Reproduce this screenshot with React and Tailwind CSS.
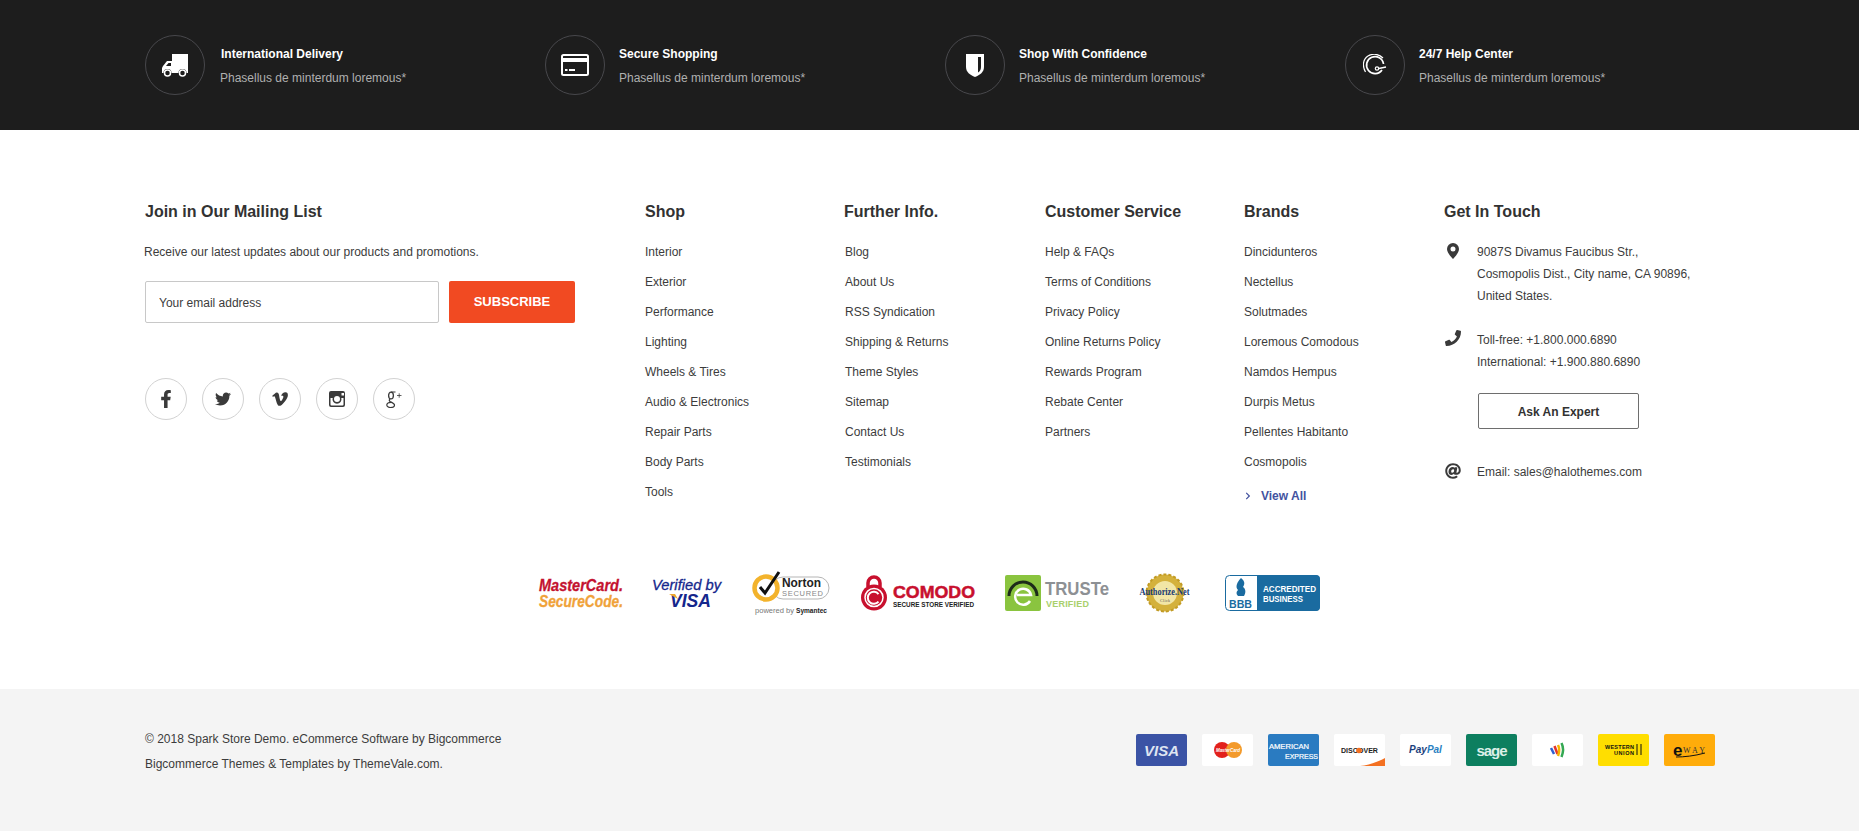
import React from 'react';
import { FaFacebookF, FaTwitter, FaVimeoV, FaPhone, FaAt, FaChevronRight } from 'react-icons/fa';

const features = ['International Delivery', 'Secure Shopping', 'Shop With Confidence', '24/7 Help Center'];

const columns = [
    { title: 'Shop', width: 'w-[199px]', items: ['Interior', 'Exterior', 'Performance', 'Lighting', 'Wheels & Tires', 'Audio & Electronics', 'Repair Parts', 'Body Parts', 'Tools'] },
    { title: 'Further Info.', width: 'w-[201px]', listClass: 'pl-px', items: ['Blog', 'About Us', 'RSS Syndication', 'Shipping & Returns', 'Theme Styles', 'Sitemap', 'Contact Us', 'Testimonials'] },
    { title: 'Customer Service', width: 'w-[199px]', items: ['Help & FAQs', 'Terms of Conditions', 'Privacy Policy', 'Online Returns Policy', 'Rewards Program', 'Rebate Center', 'Partners'] },
    { title: 'Brands', width: 'w-[200px]', items: ['Dincidunteros', 'Nectellus', 'Solutmades', 'Loremous Comodous', 'Namdos Hempus', 'Durpis Metus', 'Pellentes Habitanto', 'Cosmopolis'], viewAll: true },
];

const TruckIcon = () => (
    <svg width="26" height="23" viewBox="0 0 26 23">
        <path d="M10 0h16v19H10z" fill="#fff" />
        <path d="M10 7H5L1 12 0 14v5h10z" fill="#fff" />
        <path d="M4 12l2.500-3H9v3z" fill="#1d1d1d" />
        <circle cx="5.500" cy="19" r="4" fill="#1d1d1d" />
        <circle cx="20.500" cy="19" r="4" fill="#1d1d1d" />
        <circle cx="5.500" cy="19" r="3" fill="#1d1d1d" stroke="#fff" strokeWidth="1.500" />
        <circle cx="20.500" cy="19" r="3" fill="#1d1d1d" stroke="#fff" strokeWidth="1.500" />
    </svg>
);

const CardIcon = () => (
    <svg width="28" height="22" viewBox="0 0 28 22">
        <rect x="1" y="1" width="26" height="20" rx="1.500" fill="none" stroke="#fff" strokeWidth="2" />
        <rect x="1" y="4" width="26" height="4" fill="#fff" />
        <rect x="4" y="15" width="2.500" height="2" fill="#fff" />
        <rect x="8" y="15" width="6" height="2" fill="#fff" />
    </svg>
);

const ShieldIcon = () => (
    <svg width="18" height="23" viewBox="0 0 18 23">
        <path d="M0 0h18v13c0 5-4 8-9 10-5-2-9-5-9-10z" fill="#fff" />
        <path d="M12 3h3v10c0 3-1.500 4.500-3 5.500z" fill="#1d1d1d" />
    </svg>
);

const HeadsetIcon = () => (
    <svg width="24" height="22" viewBox="0 0 24 22" fill="none" stroke="#fff">
        <path d="M2.500 18C-1 12 0 5 5 2c5-3 11-2 15 2" strokeWidth="1.200" />
        <path d="M20.500 10a8.500 8.500 0 1 0-1.500 6" strokeWidth="1.700" />
        <circle cx="14" cy="14.500" r="1.700" strokeWidth="1.200" />
        <path d="M15.800 14.500l7.200-1.500" strokeWidth="1.400" />
    </svg>
);

const featureIcons = [<TruckIcon />, <CardIcon />, <ShieldIcon />, <HeadsetIcon />];

const InstagramIcon = () => (
    <svg width="16" height="16" viewBox="0 0 16 16">
        <path fillRule="evenodd" d="M2 0h12a2 2 0 0 1 2 2v12a2 2 0 0 1-2 2H2a2 2 0 0 1-2-2V2a2 2 0 0 1 2-2zm10.500 2v2.500H15V2zM1.500 7v6.500a1 1 0 0 0 1 1h11a1 1 0 0 0 1-1V7h-2.200a4.500 4.500 0 1 1-8.600 0zM8 5a3 3 0 1 0 0 6 3 3 0 0 0 0-6z" fill="#3a3a3a" />
    </svg>
);

const GooglePlusIcon = () => (
    <svg width="16" height="17" viewBox="0 0 16 17" fill="none" stroke="#3a3a3a">
        <ellipse cx="5" cy="4.500" rx="2.400" ry="3.400" strokeWidth="1.300" />
        <path d="M5 1h4.500" strokeWidth="1" />
        <path d="M4 8c-1 1-1 1.500 0 2.500 2 1 4.500 2 4.500 3.500 0 1.500-2 2.500-4 2.500S.8 15.500.8 14c0-1.500 2-2.500 4.200-2.600" strokeWidth="1.200" />
        <path d="M11 4.500h4.500M13.200 2.300v4.400" strokeWidth=".8" />
    </svg>
);

const socials = [
    <FaFacebookF className="text-[18px]" />,
    <FaTwitter className="text-[16px]" />,
    <FaVimeoV className="text-[18px]" />,
    <InstagramIcon />,
    <GooglePlusIcon />,
];

const PinIcon = () => (
    <svg width="14" height="16" viewBox="0 0 14 16">
        <path fillRule="evenodd" d="M7 0a6 6 0 0 1 6 6c0 3.500-4 8-6 10-2-2-6-6.500-6-10a6 6 0 0 1 6-6zm0 3.500a2.500 2.500 0 1 0 0 5 2.500 2.500 0 0 0 0-5z" fill="#3a3a3a" />
    </svg>
);

const MasterCardLogo = () => (
    <svg className="overflow-visible" width="85" height="32" viewBox="0 0 85 32" fontFamily="Liberation Sans" fontWeight="700" fontStyle="italic">
        <text x="0" y="14" fontSize="17" fill="#c4122f" stroke="#c4122f" strokeWidth=".3" textLength="84" lengthAdjust="spacingAndGlyphs">MasterCard.</text>
        <text x="0" y="30" fontSize="17" fill="#f0a23a" stroke="#f0a23a" strokeWidth=".3" textLength="84" lengthAdjust="spacingAndGlyphs">SecureCode.</text>
    </svg>
);

const VisaLogo = () => (
    <svg className="overflow-visible" width="70" height="32" viewBox="0 0 70 32" fontFamily="Liberation Sans" fill="#14268c">
        <text x="0" y="13" fontSize="15" fontStyle="italic" textLength="69" lengthAdjust="spacingAndGlyphs" stroke="#14268c" strokeWidth=".3">Verified by</text>
        <text x="18" y="30" fontSize="19" fontWeight="700" fontStyle="italic" textLength="41" lengthAdjust="spacingAndGlyphs">VISA</text>
        <path d="M17 17h6l3 5z" fill="#eda72e" />
    </svg>
);

const NortonLogo = () => (
    <svg className="overflow-visible" width="78" height="44" viewBox="0 0 78 44" fontFamily="Liberation Sans">
        <rect x="20" y="6" width="57" height="22" rx="11" fill="#fff" stroke="#b5b5b5" />
        <circle cx="14" cy="17" r="11.500" fill="#fff" stroke="#f3b32c" strokeWidth="4.500" />
        <path d="M8 16l5 6L27 1" fill="none" stroke="#111" strokeWidth="3" />
        <text x="30" y="16" fontSize="12" fontWeight="700" fill="#222" textLength="39" lengthAdjust="spacingAndGlyphs">Norton</text>
        <text x="30" y="25" fontSize="7.500" fill="#888" textLength="41">SECURED</text>
        <text x="3" y="42" fontSize="6.500" fill="#777" textLength="39" lengthAdjust="spacingAndGlyphs">powered by</text>
        <text x="44" y="42" fontSize="6.500" fontWeight="700" fill="#222" textLength="31" lengthAdjust="spacingAndGlyphs">Symantec</text>
    </svg>
);

const ComodoLogo = () => (
    <svg className="overflow-visible" width="116" height="36" viewBox="0 0 116 36" fontFamily="Liberation Sans">
        <path d="M8 12V8a6 6 0 0 1 12 0v4" fill="none" stroke="#c8102e" strokeWidth="3.500" />
        <circle cx="14" cy="22.500" r="13" fill="#c8102e" />
        <circle cx="14" cy="22.500" r="9" fill="none" stroke="#fff" strokeWidth="1.500" />
        <path d="M18.500 19a6 6 0 1 0 0 7.500" fill="none" stroke="#fff" strokeWidth="2" />
        <text x="33" y="23" fontSize="17" fontWeight="700" fill="#c8102e" textLength="82" lengthAdjust="spacingAndGlyphs" stroke="#c8102e" strokeWidth=".5">COMODO</text>
        <text x="33" y="32" fontSize="7.500" fontWeight="700" fill="#222" textLength="81" lengthAdjust="spacingAndGlyphs">SECURE STORE VERIFIED</text>
    </svg>
);

const TrusteLogo = () => (
    <svg className="overflow-visible" width="104" height="36" viewBox="0 0 104 36" fontFamily="Liberation Sans">
        <rect width="36" height="36" rx="2" fill="#8ac43f" />
        <path d="M4 21A14 14 0 0 1 32 21" fill="none" stroke="#1d2b1a" strokeWidth="3" />
        <path d="M25 26a8 8 0 1 1 1-6H12" fill="none" stroke="#fff" strokeWidth="2.500" />
        <text x="40" y="20" fontSize="19" fontWeight="700" fill="#8d9094" textLength="64" lengthAdjust="spacingAndGlyphs">TRUSTe</text>
        <text x="41" y="32" fontSize="9" fontWeight="700" fill="#a9d06c" textLength="43">VERIFIED</text>
    </svg>
);

const AuthorizeLogo = () => (
    <svg className="overflow-visible" width="51" height="40" viewBox="0 0 51 40" fontFamily="Liberation Serif">
        <circle cx="26" cy="20" r="18.500" fill="#d4b13c" stroke="#c29b24" strokeWidth="2" strokeDasharray="3 2" />
        <circle cx="26" cy="20" r="12" fill="#f2e6a6" />
        <text x=".5" y="22" fontSize="9.500" fontWeight="700" fill="#173a73" textLength="50" lengthAdjust="spacingAndGlyphs">Authorize.Net</text>
        <text x="21" y="29" fontSize="4" fill="#555" textLength="10">Click</text>
    </svg>
);

const BbbLogo = () => (
    <svg className="overflow-visible" width="95" height="36" viewBox="0 0 95 36" fontFamily="Liberation Sans">
        <rect x=".5" y=".5" width="94" height="35" rx="4" fill="#fff" stroke="#1a6ba0" />
        <path d="M32 0h59a4 4 0 0 1 4 4v28a4 4 0 0 1-4 4H32z" fill="#1a6ba0" />
        <path d="M16 3c4 3 4 6 2 9 3 2 3 6 1 9h-6c-2-2-2-4 0-6-3-3-1-8 3-12z" fill="#1a6ba0" />
        <text x="4" y="33" fontSize="10" fontWeight="700" fill="#1a6ba0" textLength="23" lengthAdjust="spacingAndGlyphs">BBB</text>
        <text x="38" y="17" fontSize="8.500" fontWeight="700" fill="#fff" textLength="53" lengthAdjust="spacingAndGlyphs">ACCREDITED</text>
        <text x="38" y="27" fontSize="8.500" fontWeight="700" fill="#fff" textLength="40" lengthAdjust="spacingAndGlyphs">BUSINESS</text>
    </svg>
);

const Pay = ({ bg, children }) => (
    <div className={`flex h-8 w-[51px] items-center justify-center rounded-[2px] ${bg}`}>{children}</div>
);

const PaymentCards = () => (
    <div className="mt-[7px] flex gap-[15px] font-['Liberation_Sans',sans-serif]">
        <Pay bg="bg-[#3b53a5]"><span className="text-[15px] font-bold italic leading-none text-[#dfe5f2]">VISA</span></Pay>
        <Pay bg="bg-white">
            <svg className="overflow-visible" width="28" height="16" viewBox="0 0 28 16">
                <circle cx="8" cy="8" r="8" fill="#e2211c" />
                <circle cx="20" cy="8" r="8" fill="#f39a2b" />
                <text x="2" y="10" fontSize="4.500" fontWeight="700" fontStyle="italic" fill="#fff" textLength="24">MasterCard</text>
            </svg>
        </Pay>
        <Pay bg="bg-[#2a7bc1]">
            <svg className="overflow-visible" width="51" height="32" viewBox="0 0 51 32" fill="#fff" stroke="#fff" strokeWidth=".2">
                <text x="1" y="15" fontSize="7" textLength="40" lengthAdjust="spacingAndGlyphs">AMERICAN</text>
                <text x="17" y="25" fontSize="7" textLength="33" lengthAdjust="spacingAndGlyphs">EXPRESS</text>
            </svg>
        </Pay>
        <Pay bg="bg-white">
            <svg className="overflow-visible" width="51" height="32" viewBox="0 0 51 32">
                <text x="7" y="19" fontSize="7.500" fontWeight="700" fill="#222" textLength="37" lengthAdjust="spacingAndGlyphs">DISCOVER</text>
                <circle cx="25" cy="16.500" r="2.800" fill="#f37021" />
                <path d="M26 32C36 31 46 27 51 24v8z" fill="#f37021" />
            </svg>
        </Pay>
        <Pay bg="bg-white"><span className="text-[10px] font-bold italic leading-none text-[#1d3f7c]">Pay<span className="text-[#2a7fc1]">Pal</span></span></Pay>
        <Pay bg="bg-[#0d7f5f]"><span className="text-[15px] font-bold leading-none tracking-[-1px] text-[#dcefe8]">sage</span></Pay>
        <Pay bg="bg-white">
            <svg width="16" height="16" viewBox="0 0 16 16" fill="none" strokeWidth="2.500">
                <path d="M1 6l3 6" stroke="#2f5fd0" />
                <path d="M4.500 4l3 8" stroke="#e4352b" />
                <path d="M8 3c1.500 3 1.500 7 0 11" stroke="#f4b400" />
                <path d="M11.500 1c2 4 2 9 0 14" stroke="#34a853" />
            </svg>
        </Pay>
        <Pay bg="bg-[#ffde00]">
            <svg className="overflow-visible" width="40" height="14" viewBox="0 0 40 14">
                <text x="1" y="6" fontSize="5.500" fontWeight="700" fill="#111" textLength="29">WESTERN</text>
                <text x="10" y="12" fontSize="5.500" fontWeight="700" fill="#111" textLength="20">UNION</text>
                <path d="M33 1v11M37 1v11" stroke="#111" />
            </svg>
        </Pay>
        <Pay bg="bg-[#ffac0a]">
            <svg className="overflow-visible" width="34" height="16" viewBox="0 0 34 16">
                <text x="0" y="14" fontSize="17" fontWeight="700" fill="#111">e</text>
                <text x="10" y="11" fontSize="8" fontFamily="Liberation Serif" fill="#333" textLength="22">WAY</text>
                <path d="M3 15c8 0 18-1 29-4" stroke="#111" fill="none" />
            </svg>
        </Pay>
    </div>
);

const App = () => {
    return (
        <div className="min-h-[831px] bg-white font-['Liberation_Sans',Arial,sans-serif] text-xs text-[#3c3c3c]">
            <div className="h-[130px] bg-[#1d1d1d] pl-[145px] pt-[35px]">
                <div className="flex">
                    {features.map((title, i) => (
                        <div key={title} className="flex w-[400px] shrink-0 items-center gap-[14px]">
                            <div className="flex h-[60px] w-[60px] items-center justify-center rounded-full border border-[#48484c]">
                                {featureIcons[i]}
                            </div>
                            <div className="pt-[2px] leading-6">
                                <div className={i === 0 ? 'pl-[2px] font-bold text-white' : 'font-bold text-white'}>{title}</div>
                                <div className={i === 0 ? 'pl-px text-[#b0b0b0]' : 'text-[#b0b0b0]'}>Phasellus de minterdum loremous*</div>
                            </div>
                        </div>
                    ))}
                </div>
            </div>

            <div className="px-[145px] pt-[72px]">
                <div className="flex">
                    <div className="w-[500px]">
                        <h4 className="mb-[15px] text-base font-bold leading-5 text-[#323232]">Join in Our Mailing List</h4>
                        <p className="-ml-px leading-[30px]">Receive our latest updates about our products and promotions.</p>
                        <form className="mt-[14px] flex gap-[10px]">
                            <input
                                placeholder="Your email address"
                                className="h-[42px] w-[294px] rounded-[2px] border border-[#c8c8c8] px-[13px] pt-[2px] text-xs outline-none placeholder:text-[#3c3c3c]"
                            />
                            <button type="button" className="h-[42px] w-[126px] rounded-[2px] bg-[#f14a22] text-[13px] font-bold text-white">SUBSCRIBE</button>
                        </form>
                        <div className="mt-[55px] flex gap-[15px]">
                            {socials.map((icon, i) => (
                                <div key={i} className="flex h-[42px] w-[42px] items-center justify-center rounded-full border border-[#d2d2d2] text-[#3a3a3a]">
                                    {icon}
                                </div>
                            ))}
                        </div>
                    </div>

                    {columns.map((col) => (
                        <div key={col.title} className={col.width}>
                            <h4 className="mb-[15px] text-base font-bold leading-5 text-[#323232]">{col.title}</h4>
                            <ul className={col.listClass}>
                                {col.items.map((item) => (
                                    <li key={item} className="leading-[30px]">{item}</li>
                                ))}
                            </ul>
                            {col.viewAll && (
                                <div className="mt-1 flex items-center gap-[9px] font-bold leading-[30px] text-[#43529f]">
                                    <FaChevronRight className="text-[8px]" />
                                    View All
                                </div>
                            )}
                        </div>
                    ))}

                    <div className="flex-1">
                        <h4 className="mb-[19px] text-base font-bold leading-5 text-[#323232]">Get In Touch</h4>
                        <div className="flex leading-[22px]">
                            <div className="w-[33px] pl-[2px] pt-[2px]"><PinIcon /></div>
                            <p>9087S Divamus Faucibus Str.,<br />Cosmopolis Dist., City name, CA 90896,<br />United States.</p>
                        </div>
                        <div className="mt-[22px] flex leading-[22px]">
                            <div className="w-[33px] pl-[1px] pt-[1px]"><FaPhone className="text-[16px] text-[#3a3a3a]" /></div>
                            <p>Toll-free: +1.800.000.6890<br />International: +1.900.880.6890</p>
                        </div>
                        <button type="button" className="ml-[34px] mt-5 h-9 w-[161px] rounded-[2px] border border-[#6e6e6e] pt-[2px] font-bold text-[#323232]">Ask An Expert</button>
                        <div className="mt-8 flex leading-[22px]">
                            <div className="w-[33px] pl-[1px] pt-[2px]"><FaAt className="text-[16px] text-[#3a3a3a]" /></div>
                            <p>Email: sales@halothemes.com</p>
                        </div>
                    </div>
                </div>

                <div className="mb-[74px] mt-[60px] flex h-[44px] items-center justify-center">
                    <MasterCardLogo />
                    <div className="ml-[28px]"><VisaLogo /></div>
                    <div className="ml-[30px]"><NortonLogo /></div>
                    <div className="ml-[30px]"><ComodoLogo /></div>
                    <div className="ml-[29px]"><TrusteLogo /></div>
                    <div className="ml-[30px]"><AuthorizeLogo /></div>
                    <div className="ml-[35px]"><BbbLogo /></div>
                </div>
            </div>

            <div className="flex h-[142px] items-start justify-between bg-[#f4f4f4] pl-[145px] pr-[144px] pt-[38px]">
                <div className="leading-[25px]">
                    <p>© 2018 Spark Store Demo. eCommerce Software by Bigcommerce</p>
                    <p>Bigcommerce Themes &amp; Templates by ThemeVale.com.</p>
                </div>
                <PaymentCards />
            </div>
        </div>
    );
};

export default App;
